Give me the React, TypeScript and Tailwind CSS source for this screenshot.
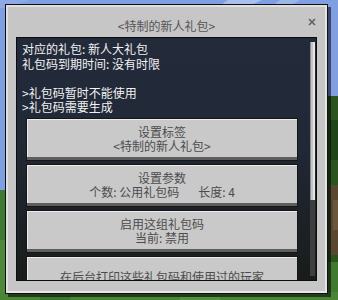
const Scene = () => {
    return (
        <svg className="absolute inset-0" width="338" height="300" viewBox="0 0 338 300">
            <rect x="0" y="0" width="338" height="300" fill="#7f9fe2" />
            <polygon points="228,0 262,0 236,12 210,12" fill="#a9c0ee" />
            <polygon points="280,0 300,0 290,6 272,6" fill="#9db6ea" />
            <polygon points="0,0 30,0 10,8 0,8" fill="#8ea9e6" />
            <rect x="0" y="190" width="6" height="110" fill="#3e7a30" />
            <rect x="0" y="240" width="6" height="60" fill="#4c8a3a" />
            <rect x="326" y="96" width="12" height="204" fill="#2c5420" />
            <rect x="330" y="120" width="8" height="40" fill="#1f4417" />
            <rect x="330" y="185" width="8" height="70" fill="#5a4732" />
            <rect x="333" y="200" width="5" height="30" fill="#6b563b" />
            <rect x="326" y="262" width="12" height="38" fill="#3f7a2e" />
            <rect x="0" y="292" width="338" height="8" fill="#4a8537" />
            <rect x="40" y="296" width="30" height="4" fill="#3d7530" />
            <rect x="180" y="297" width="40" height="3" fill="#558f3f" />
        </svg>
    );
};

const MenuButton = ({ children }: { children: React.ReactNode }) => {
    return (
        <div className="flex h-[43px] w-[272px] shrink-0 flex-col items-center justify-center border border-[#161616] bg-[#c9c9c9] text-[12px] leading-[14px] text-[#4c4c4c] shadow-[inset_0_-3px_0_#5e5e5e,inset_1px_1px_0_#ececec]">
            {children}
        </div>
    );
};

const App = () => {
    return (
        <div className="relative h-[300px] w-[338px] overflow-hidden font-['Noto_Sans_CJK_SC',sans-serif]">
            <Scene />

            <div className="relative ml-[5px] mt-[4px] flex h-[290px] w-[323px] flex-col border border-[#111] bg-[#c6c6c6] shadow-[3px_3px_0_rgba(0,0,0,0.55),inset_2px_2px_0_#e0e0e0,inset_-2px_-2px_0_#e6e6e6]">

                <div className="relative h-[32px] shrink-0 pt-[14px] text-center text-[12px] leading-[14px] text-[#555]">
                    &lt;特制的新人礼包&gt;
                    <svg className="absolute right-[11px] top-[13px]" width="8" height="8" viewBox="0 0 8 8">
                        <path d="M1 1 L7 7 M7 1 L1 7" stroke="#5e5e5e" strokeWidth="1.5" />
                    </svg>
                </div>

                <div className="ml-[10px] flex h-[244px] w-[301px] shrink-0 border border-[#0d0d0d] bg-[linear-gradient(180deg,#232a3a_0%,#212836_45%,#181c1a_100%)]">
                    <div className="flex flex-1 flex-col overflow-hidden">
                        <div className="px-[5px] pt-[4px] text-[12px] leading-[14.5px] text-[#f2f2f2]">
                            <p>对应的礼包: 新人大礼包</p>
                            <p>礼包码到期时间: 没有时限</p>
                            <p className="h-[14.5px]"></p>
                            <p>&gt;礼包码暂时不能使用</p>
                            <p>&gt;礼包码需要生成</p>
                        </div>

                        <div className="mt-[3px] flex flex-col gap-[3px] pl-[9px]">
                            <MenuButton>
                                <span>设置标签</span>
                                <span>&lt;特制的新人礼包&gt;</span>
                            </MenuButton>
                            <MenuButton>
                                <span>设置参数</span>
                                <span className="flex gap-[19px]">
                                    <span>个数: 公用礼包码</span>
                                    <span>长度: 4</span>
                                </span>
                            </MenuButton>
                            <MenuButton>
                                <span>启用这组礼包码</span>
                                <span>当前: 禁用</span>
                            </MenuButton>
                            <MenuButton>
                                <span>在后台打印这些礼包码和使用过的玩家</span>
                            </MenuButton>
                        </div>
                    </div>

                    <div className="mr-[1px] mt-[4px] flex w-[5px] shrink-0 flex-col">
                        <div className="h-[158px] bg-[#c4c4c4] shadow-[inset_-2px_0_0_#e4e4e4,inset_1px_0_0_#8c8c8c]"></div>
                        <div className="h-[76px] bg-[#3e3e3e]"></div>
                    </div>
                </div>
            </div>
        </div>
    );
};

export default App;
